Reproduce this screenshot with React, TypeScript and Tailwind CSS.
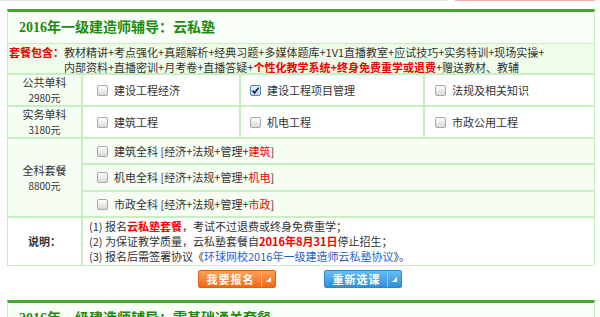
import React from "react";

const Box = ({ checked }: { checked?: boolean }) =>
  checked ? (
    <span className="w-[11px] h-[11px] rounded-[2px] border border-[#5a82b6] bg-linear-to-b from-[#eef4fc] to-[#c2d6ee] flex items-center justify-center shrink-0">
      <svg width="9" height="9" viewBox="0 0 9 9">
        <path d="M1.6 4.6 L3.6 6.9 L7.6 1.8" stroke="#1b2533" strokeWidth="1.7" fill="none" />
      </svg>
    </span>
  ) : (
    <span className="w-[11px] h-[11px] rounded-[2px] border border-[#a8a8a8] bg-linear-to-b from-white to-[#d9d9d9] shrink-0" />
  );

const Opt = ({ children, checked }: { children: React.ReactNode; checked?: boolean }) => (
  <div className="flex items-center gap-[6px] whitespace-nowrap">
    <Box checked={checked} />
    <span>{children}</span>
  </div>
);

const Label = ({ title, price }: { title: string; price: string }) => (
  <div className="flex flex-col items-center justify-center bg-[#f6fdf2] border-r-2 border-[#c8efc0] leading-[15px]">
    <span>{title}</span>
    <span className="text-[10px]">{price}</span>
  </div>
);

const Red = ({ children }: { children: React.ReactNode }) => (
  <span className="text-[#f00000]">{children}</span>
);

const Tri = () => (
  <svg width="5" height="5" viewBox="0 0 5 5">
    <path d="M0 5 L5 5 L5 0 Z" fill="#fff" />
  </svg>
);

const Panel = ({ title, children }: { title: string; children?: React.ReactNode }) => (
  <div className="ml-[7px] w-[588px] border-t-[3px] border-t-[#46a832] border-x border-x-[#c8efc0] bg-[#f8fff6]">
    <div className="h-[32px] flex items-center pl-[11px] border-b border-[#c8efc0] text-[14px] font-bold text-[#1e8a12] font-['Liberation_Serif','Noto_Sans_CJK_SC',serif]">
      {title}
    </div>
    {children}
  </div>
);

export default function App() {
  return (
    <div className="w-[600px] bg-white text-[11px] text-[#333] font-['Noto_Sans_CJK_SC',sans-serif]">
      <div className="flex h-px">
        <div className="w-[447px] bg-[#dfe4e8]" />
        <div className="ml-[8px] w-[140px] bg-[#f7b2b2]" />
      </div>
      <div className="h-[8px]" />
      <Panel title="2016年一级建造师辅导：云私塾">
        <div className="flex h-[31px] pt-[1px] bg-[#effce9] border-b-2 border-[#c8efc0] leading-[15px] whitespace-nowrap">
          <span className="font-bold text-[#e60000] pl-[1px]">套餐包含：</span>
          <div>
            教材精讲+考点强化+真题解析+经典习题+多媒体题库+1V1直播教室+应试技巧+实务特训+现场实操+
            <br />
            内部资料+直播密训+月考卷+直播答疑+
            <span className="font-bold text-[#f00000]">个性化教学系统+终身免费重学或退费</span>
            +赠送教材、教辅
          </div>
        </div>

        <div className="grid grid-cols-[75px_158px_184px_1fr] h-[32px] border-b-2 border-[#c8efc0] bg-white">
          <Label title="公共单科" price="2980元" />
          <div className="flex items-center pl-[14px] border-r-2 border-[#c8efc0]">
            <Opt>建设工程经济</Opt>
          </div>
          <div className="flex items-center pl-[9px] border-r-2 border-[#c8efc0]">
            <Opt checked>建设工程项目管理</Opt>
          </div>
          <div className="flex items-center pl-[10px]">
            <Opt>法规及相关知识</Opt>
          </div>
        </div>

        <div className="grid grid-cols-[75px_158px_184px_1fr] h-[32px] border-b-2 border-[#c8efc0] bg-white">
          <Label title="实务单科" price="3180元" />
          <div className="flex items-center pl-[14px] border-r-2 border-[#c8efc0]">
            <Opt>建筑工程</Opt>
          </div>
          <div className="flex items-center pl-[9px] border-r-2 border-[#c8efc0]">
            <Opt>机电工程</Opt>
          </div>
          <div className="flex items-center pl-[10px]">
            <Opt>市政公用工程</Opt>
          </div>
        </div>

        <div className="grid grid-cols-[75px_1fr] border-b-2 border-[#c8efc0] bg-[#f6fdf2]">
          <Label title="全科套餐" price="8800元" />
          <div className="flex flex-col">
            <div className="h-[26px] flex items-center pl-[14px] border-b-2 border-[#c8efc0]">
              <Opt>
                建筑全科 [经济+法规+管理+<Red>建筑</Red>]
              </Opt>
            </div>
            <div className="h-[27px] flex items-center pl-[14px] border-b-2 border-[#c8efc0]">
              <Opt>
                机电全科 [经济+法规+管理+<Red>机电</Red>]
              </Opt>
            </div>
            <div className="h-[24px] flex items-center pl-[14px]">
              <Opt>
                市政全科 [经济+法规+管理+<Red>市政</Red>]
              </Opt>
            </div>
          </div>
        </div>

        <div className="grid grid-cols-[75px_1fr] border-b border-[#c8efc0] bg-white">
          <div className="flex items-center justify-center border-r-2 border-[#c8efc0] font-bold">说明：</div>
          <div className="pl-[6px] pt-[1px] pb-[1px] leading-[15px] whitespace-nowrap">
            <div>
              (1) 报名<span className="font-bold text-[#f00000]">云私塾套餐</span>，考试不过退费或终身免费重学；
            </div>
            <div>
              (2) 为保证教学质量，云私塾套餐自<span className="font-bold text-[#f00000]">2016年8月31日</span>停止招生；
            </div>
            <div>
              (3) 报名后需签署协议《<span className="text-[#1f62d0]">环球网校2016年一级建造师云私塾协议</span>》。
            </div>
          </div>
        </div>
      </Panel>

      <div className="flex justify-center gap-[48px] mt-[4px]">
        <div className="w-[78px] h-[18px] rounded-[2px] border border-[#e0620e] bg-linear-to-b from-[#ffa055] to-[#f0680c] flex text-white font-bold text-[11px] tracking-[1px]">
          <span className="flex-1 flex items-center justify-center pl-[1px]">我要报名</span>
          <span className="w-px bg-[#ffb886]" />
          <span className="w-[13px] flex items-center justify-center">
            <Tri />
          </span>
        </div>
        <div className="w-[78px] h-[18px] rounded-[2px] border border-[#2d88d2] bg-linear-to-b from-[#68bdf2] to-[#2e8fdc] flex text-white font-bold text-[11px] tracking-[1px]">
          <span className="flex-1 flex items-center justify-center pl-[1px]">重新选课</span>
          <span className="w-px bg-[#8ccaf4]" />
          <span className="w-[13px] flex items-center justify-center">
            <Tri />
          </span>
        </div>
      </div>

      <div className="h-[12px]" />
      <Panel title="2016年一级建造师辅导：零基础通关套餐">
        <div className="h-[40px] bg-[#effce9]" />
      </Panel>
    </div>
  );
}
